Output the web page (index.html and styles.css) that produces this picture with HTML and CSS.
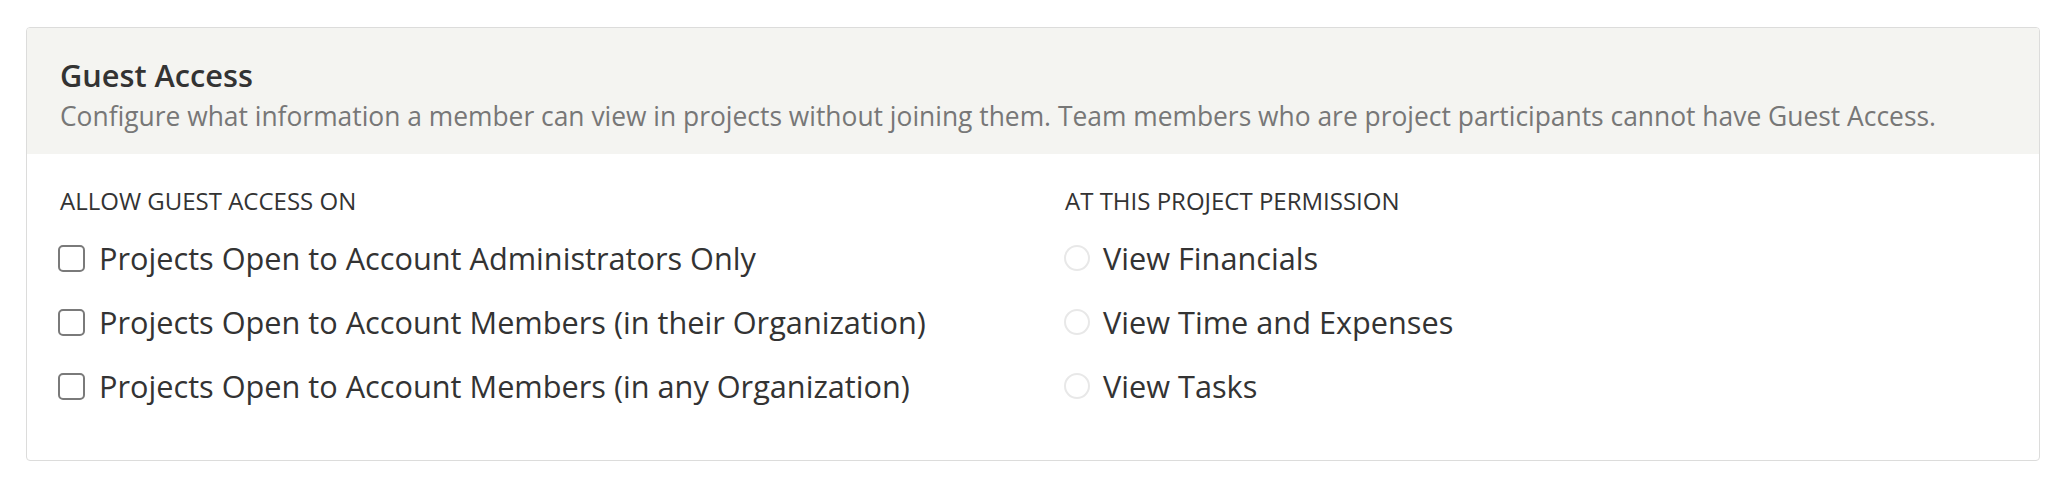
FILE: index.html
```html
<!DOCTYPE html>
<html lang="en">
<head>
<meta charset="utf-8">
<title>Guest Access</title>
<link rel="stylesheet" href="styles.css">
</head>
<body>
<section class="card">
  <header class="card-header">
    <h2 class="title">Guest Access</h2>
    <p class="desc">Configure what information a member can view in projects without joining them. Team members who are project participants cannot have Guest Access.</p>
  </header>
  <div class="card-body">
    <div class="col">
      <div class="label">ALLOW GUEST ACCESS ON</div>
      <ul class="options">
        <li class="option"><span class="checkbox"></span><span>Projects Open to Account Administrators Only</span></li>
        <li class="option"><span class="checkbox"></span><span>Projects Open to Account Members (in their Organization)</span></li>
        <li class="option"><span class="checkbox"></span><span>Projects Open to Account Members (in any Organization)</span></li>
      </ul>
    </div>
    <div class="col">
      <div class="label">AT THIS PROJECT PERMISSION</div>
      <ul class="options">
        <li class="option"><span class="radio"></span><span>View Financials</span></li>
        <li class="option"><span class="radio"></span><span>View Time and Expenses</span></li>
        <li class="option"><span class="radio"></span><span>View Tasks</span></li>
      </ul>
    </div>
  </div>
</section>
</body>
</html>
```
FILE: styles.css
```css
* { box-sizing: border-box; }
html, body { margin: 0; padding: 0; background: #fff; }
body {
  font-family: "Open Sans", "Noto Sans", sans-serif;
  color: #333;
  padding: 27px 25px 0 26px;
}
.card {
  border: 1px solid #dcdcdb;
  border-radius: 4px;
  overflow: hidden;
  width: 2014px;
}
.card-header {
  background: #f4f4f1;
  padding: 27px 33px 20px 33px;
}
.title {
  margin: 0;
  font-size: 30.7px;
  font-weight: 600;
  line-height: 40px;
  color: #333;
}
.desc {
  margin: 3px 0 0 0;
  font-size: 26.4px;
  line-height: 36px;
  color: #777;
}
.card-body {
  display: grid;
  grid-template-columns: 1005px 1fr;
  padding: 31px 33px 54px 33px;
}
.label {
  font-size: 24px;
  line-height: 32px;
  color: #333;
}
.options {
  list-style: none;
  margin: 21px 0 0 0;
  padding: 0;
  display: flex;
  flex-direction: column;
  gap: 24px;
}
.option {
  display: flex;
  align-items: center;
  gap: 14px;
  font-size: 30.7px;
  line-height: 40px;
  color: #333;
}
.checkbox {
  flex: none;
  width: 27px;
  height: 27px;
  margin-left: -2px;
  border: 2px solid #7a7a7a;
  border-radius: 5px;
  background: #fff;
}
.radio {
  flex: none;
  width: 26px;
  height: 26px;
  margin-left: -1px;
  margin-right: -1px;
  border: 2px solid #e8e8e8;
  border-radius: 50%;
  background: #fff;
}
```
